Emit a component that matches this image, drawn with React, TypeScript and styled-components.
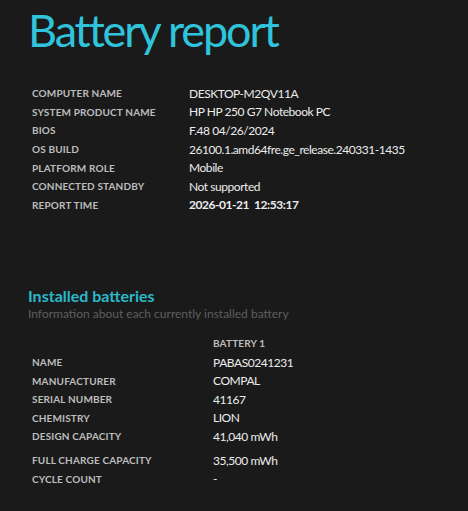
import React from 'react';
import styled, { createGlobalStyle } from 'styled-components';

const GlobalStyle = createGlobalStyle`
  html, body {
    margin: 0;
    padding: 0;
    background: #1a1a1a;
  }
  body {
    font-family: Lato, 'Open Sans', sans-serif;
  }
`;

const Page = styled.div`
  width: 468px;
  height: 511px;
  box-sizing: border-box;
  padding: 7px 0 0 32px;
  background: #1a1a1a;
  overflow: hidden;
`;

const Title = styled.h1`
  margin: 0 0 0 -4px;
  font-size: 45px;
  line-height: 46px;
  font-weight: 400;
  letter-spacing: -2.1px;
  color: #2fc4db;
`;

const Table = styled.div`
  display: flex;
  flex-direction: column;
`;

const Row = styled.div<{ $labelWidth: number; $gapTop?: number }>`
  display: grid;
  grid-template-columns: ${(p) => p.$labelWidth}px auto;
  align-items: center;
  height: 18.6px;
  margin-top: ${(p) => p.$gapTop ?? 0}px;
`;

const Label = styled.div`
  font-size: 10px;
  font-weight: 700;
  letter-spacing: 0.15px;
  color: #bdbdbd;
  text-transform: uppercase;
  white-space: nowrap;
`;

const Value = styled.div<{ $bold?: boolean }>`
  font-size: 12px;
  font-weight: ${(p) => (p.$bold ? 700 : 400)};
  letter-spacing: -0.45px;
  color: #ececec;
  white-space: pre;
`;

const InfoBlock = styled(Table)`
  margin-top: 31px;
`;

const Section = styled.section`
  margin-top: 72px;
`;

const SectionTitle = styled.h2`
  margin: 0 0 0 -4px;
  font-size: 16px;
  line-height: 20px;
  font-weight: 700;
  color: #2bb8c9;
`;

const SectionSub = styled.div`
  margin-left: -4px;
  font-size: 12px;
  line-height: 16px;
  color: #5e5e5e;
`;

const BatteryBlock = styled(Table)`
  margin-top: 12px;
`;

const info: [string, string][] = [
  ['Computer name', 'DESKTOP-M2QV11A'],
  ['System product name', 'HP HP 250 G7 Notebook PC'],
  ['BIOS', 'F.48 04/26/2024'],
  ['OS build', '26100.1.amd64fre.ge_release.240331-1435'],
  ['Platform role', 'Mobile'],
  ['Connected standby', 'Not supported'],
];

const battery: [string, string, number?][] = [
  ['Name', 'PABAS0241231'],
  ['Manufacturer', 'COMPAL'],
  ['Serial number', '41167'],
  ['Chemistry', 'LION'],
  ['Design capacity', '41,040 mWh'],
  ['Full charge capacity', '35,500 mWh', 5],
  ['Cycle count', '-'],
];

const App: React.FC = () => (
  <Page>
    <GlobalStyle />
    <Title>Battery report</Title>
    <InfoBlock>
      {info.map(([k, v]) => (
        <Row key={k} $labelWidth={157}>
          <Label>{k}</Label>
          <Value>{v}</Value>
        </Row>
      ))}
      <Row $labelWidth={157}>
        <Label>Report time</Label>
        <Value $bold>{'2026-01-21  12:53:17'}</Value>
      </Row>
    </InfoBlock>
    <Section>
      <SectionTitle>Installed batteries</SectionTitle>
      <SectionSub>Information about each currently installed battery</SectionSub>
      <BatteryBlock>
        <Row $labelWidth={181}>
          <span />
          <Label>Battery 1</Label>
        </Row>
        {battery.map(([k, v, gap]) => (
          <Row key={k} $labelWidth={181} $gapTop={gap}>
            <Label>{k}</Label>
            <Value>{v}</Value>
          </Row>
        ))}
      </BatteryBlock>
    </Section>
  </Page>
);

export default App;
